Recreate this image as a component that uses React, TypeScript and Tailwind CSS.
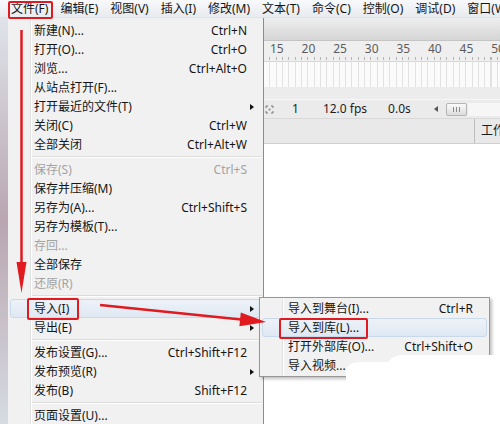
import React from 'react';

type Item = {
  label?: string;
  shortcut?: string;
  sub?: boolean;
  disabled?: boolean;
  active?: boolean;
  sep?: boolean;
};

const topMenus = ['文件(F)', '编辑(E)', '视图(V)', '插入(I)', '修改(M)', '文本(T)', '命令(C)', '控制(O)', '调试(D)', '窗口(W)'];

const fileMenu: Item[] = [
  { label: '新建(N)...', shortcut: 'Ctrl+N' },
  { label: '打开(O)...', shortcut: 'Ctrl+O' },
  { label: '浏览...', shortcut: 'Ctrl+Alt+O' },
  { label: '从站点打开(F)...' },
  { label: '打开最近的文件(T)', sub: true },
  { label: '关闭(C)', shortcut: 'Ctrl+W' },
  { label: '全部关闭', shortcut: 'Ctrl+Alt+W' },
  { sep: true },
  { label: '保存(S)', shortcut: 'Ctrl+S', disabled: true },
  { label: '保存并压缩(M)' },
  { label: '另存为(A)...', shortcut: 'Ctrl+Shift+S' },
  { label: '另存为模板(T)...' },
  { label: '存回...', disabled: true },
  { label: '全部保存' },
  { label: '还原(R)', disabled: true },
  { sep: true },
  { label: '导入(I)', sub: true, active: true },
  { label: '导出(E)', sub: true },
  { sep: true },
  { label: '发布设置(G)...', shortcut: 'Ctrl+Shift+F12' },
  { label: '发布预览(R)', sub: true },
  { label: '发布(B)', shortcut: 'Shift+F12' },
  { sep: true },
  { label: '页面设置(U)...' },
];

const importMenu: Item[] = [
  { label: '导入到舞台(I)...', shortcut: 'Ctrl+R' },
  { label: '导入到库(L)...', active: true },
  { label: '打开外部库(O)...', shortcut: 'Ctrl+Shift+O' },
  { label: '导入视频...' },
];

const rulerNums = ['15', '20', '25', '30', '35', '40', '45', '50'];

const SubArrow = () => (
  <span className="block w-0 h-0 border-y-[3.5px] border-y-transparent border-l-[4px] border-l-[#111]" />
);

const MenuRow: React.FC<{ item: Item; pl: string }> = ({ item, pl }) => (
  <div className="relative h-[19px]">
    {item.active && (
      <span className="absolute inset-y-0 left-[2px] right-[2px] rounded-[3px] border border-[#c9d9ec] bg-gradient-to-b from-[#edf2f8] to-[#dfe8f3]" />
    )}
    <div className={`relative flex h-full items-center ${pl} ${item.disabled ? 'text-[#a3a3a3]' : 'text-[#151515]'}`}>
      <span className="whitespace-nowrap">{item.label}</span>
      <span className="flex-1" />
      {item.shortcut && <span className="whitespace-nowrap">{item.shortcut}</span>}
      <span className="flex w-[16px] shrink-0 justify-start pl-[3px]">{item.sub && <SubArrow />}</span>
    </div>
  </div>
);

const Separator = () => (
  <div className="flex h-[6px] items-center pl-[24px] pr-[1px]">
    <div className="h-[2px] w-full border-t border-[#dcdcdc] border-b border-b-white" />
  </div>
);

export default function App() {
  return (
    <div className="relative h-[424px] w-[500px] overflow-hidden bg-white text-[12px] leading-none font-['Noto_Sans','Noto_Sans_CJK_SC',sans-serif]">
      {/* menu bar */}
      <div className="flex h-[18px] items-center gap-[12px] overflow-hidden border-b border-[#dfe3e8] bg-gradient-to-b from-[#f8f9fb] to-[#e8ebef] pl-[11px] text-[#151515]">
        {topMenus.map((m) => (
          <span key={m} className="shrink-0 whitespace-nowrap">{m}</span>
        ))}
      </div>

      <div className="flex h-[406px]">
        {/* desktop behind */}
        <div className="w-[8px] shrink-0 bg-gradient-to-b from-[#dfe4ea] via-[#b9a6b0] to-[#d6dbe2]" />

        {/* file menu */}
        <div className="w-[256px] shrink-0 overflow-hidden border-r border-[#8c8c8c] bg-[linear-gradient(to_right,#f1f1f1_22px,#e0e1e1_22px,#e0e1e1_23px,#ffffff_23px,#ffffff_24px,#f1f1f1_24px)] pt-[3px]">
          {fileMenu.map((it, i) =>
            it.sep ? <Separator key={i} /> : <MenuRow key={i} item={it} pl="pl-[26px]" />
          )}
        </div>

        {/* flash workspace */}
        <div className="flex min-w-0 flex-1 flex-col overflow-hidden">
          <div className="h-[23px] border-b border-[#c4c4c4] bg-gradient-to-b from-[#efefef] to-[#d5d5d5]" />
          <div className="relative h-[20px] bg-[#efefef] text-[#5c5c5c]">
            <div className="flex h-[16px] items-center pl-[6px]">
              {rulerNums.map((n) => (
                <span key={n} className="w-[31.6px] shrink-0 text-[12px]">{n}</span>
              ))}
            </div>
            <div className="h-[3px] bg-[repeating-linear-gradient(to_right,transparent_0,transparent_5.3px,#b5b5b5_5.3px,#b5b5b5_6.32px)]" />
          </div>
          <div className="h-[26px] border-t border-[#d8d8d8] bg-[repeating-linear-gradient(to_right,#fbfbfb_0,#fbfbfb_5.3px,#e2e2e2_5.3px,#e2e2e2_6.32px)]" />
          <div className="h-[12px] bg-[#ececec]" />
          <div className="flex h-[19px] items-center border-t border-[#f7f7f7] bg-[#ebebeb] text-[#1e1e1e]">
            <svg className="ml-[1px] h-[9px] w-[9px] shrink-0" viewBox="0 0 9 9">
              <path d="M1 3V1h2M6 1h2v2M8 6v2H6M3 8H1V6" fill="none" stroke="#777" strokeWidth="1" />
              <rect x="3.5" y="3.5" width="2" height="2" fill="#999" />
            </svg>
            <span className="ml-[18px] shrink-0">1</span>
            <span className="ml-[24px] shrink-0 whitespace-nowrap">12.0 fps</span>
            <span className="ml-[21px] shrink-0">0.0s</span>
            <span className="ml-[23px] block h-0 w-0 shrink-0 border-y-[3px] border-y-transparent border-r-[4px] border-r-[#555]" />
            <span className="ml-[8px] flex h-[13px] w-[21px] shrink-0 items-center justify-center gap-[2px] rounded-[2px] border border-[#b4b4b4] bg-gradient-to-b from-[#fbfbfb] to-[#dcdcdc]">
              <span className="h-[5px] w-px bg-[#8a8a8a]" />
              <span className="h-[5px] w-px bg-[#8a8a8a]" />
              <span className="h-[5px] w-px bg-[#8a8a8a]" />
            </span>
            <span className="ml-[1px] h-[13px] flex-1 bg-[#f6f6f6]" />
          </div>
          <div className="flex h-[25px] border-t border-[#d9d9d9] bg-[#e9e9e9]">
            <span className="flex-1" />
            <span className="flex w-[26px] shrink-0 items-center overflow-hidden border-l border-[#bdbdbd] pl-[6px] whitespace-nowrap text-[#1e1e1e]">工作</span>
          </div>
          <div className="flex-1 border-t border-[#cfcfcf] bg-white" />
        </div>
      </div>

      {/* import submenu */}
      <div className="absolute left-[259px] top-[297px] w-[231px] border border-[#979797] bg-[linear-gradient(to_right,#f1f1f1_22px,#e0e1e1_22px,#e0e1e1_23px,#ffffff_23px,#ffffff_24px,#f1f1f1_24px)] py-[1px] shadow-[2px_2px_3px_rgba(0,0,0,0.25)]">
        {importMenu.map((it, i) => (
          <MenuRow key={i} item={it} pl="pl-[28px]" />
        ))}
      </div>

      {/* watermark blob */}
      <svg className="pointer-events-none absolute left-0 top-0" width="500" height="424" viewBox="0 0 500 424">
        <path
          d="M346 424 L346 372 C346 365 352 362 362 362 L388 362 C391 358 396 355 404 355 L500 355 L500 424 Z"
          fill="#ffffff"
        />
      </svg>

      {/* red annotations */}
      <div className="pointer-events-none absolute left-[8px] top-[1px] h-[18px] w-[45px] rounded-[2px] border-2 border-[#e01a1f]" />
      <div className="pointer-events-none absolute left-[27px] top-[298px] h-[22px] w-[52px] rounded-[2px] border-2 border-[#e01a1f]" />
      <div className="pointer-events-none absolute left-[279px] top-[318px] h-[21px] w-[89px] rounded-[2px] border-2 border-[#e01a1f]" />
      <svg className="pointer-events-none absolute left-0 top-0" width="500" height="424" viewBox="0 0 500 424">
        <line x1="21.5" y1="30" x2="21.5" y2="264" stroke="#e01a1f" strokeWidth="2.5" />
        <polygon points="16.5,262 26.5,262 21.5,293" fill="#e01a1f" />
        <line x1="100" y1="305" x2="241" y2="319.4" stroke="#e01a1f" strokeWidth="2.5" />
        <polygon points="240.8,312.4 239.4,326.3 266,322" fill="#e01a1f" />
      </svg>
    </div>
  );
}
